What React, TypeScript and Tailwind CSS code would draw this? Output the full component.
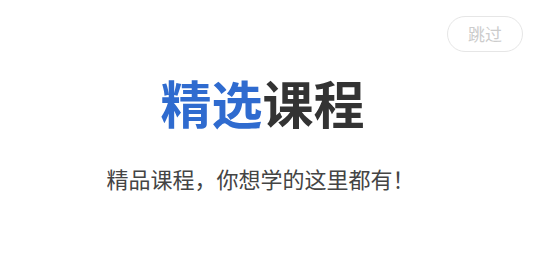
export default function App() {
  return (
    <div
      className="relative w-[541px] h-[266px] bg-white"
      style={{ fontFamily: '"Noto Sans CJK SC", "Noto Sans", sans-serif' }}
    >
      <button className="absolute left-[447px] top-[16px] w-[76px] h-[36px] rounded-full border border-[#e6e6e6] text-[17px] text-[#cccccc] flex items-center justify-center">
        跳过
      </button>
      <div className="flex flex-col items-center pt-[69px] pr-[16px]">
        <h1 className="text-[51px] leading-[66px] font-bold">
          <span className="text-[#2f6bcf]">精选</span>
          <span className="text-[#333333]">课程</span>
        </h1>
        <p className="mt-[28px] pr-[4px] text-[22px] leading-[30px] text-[#444444]">精品课程，你想学的这里都有！</p>
      </div>
    </div>
  );
}
